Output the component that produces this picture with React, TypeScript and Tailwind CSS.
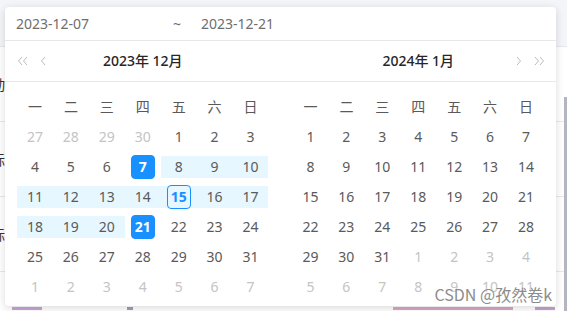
import React from "react";
import clsx from "clsx";

type Cell = {
  d: number;
  muted?: boolean;
  band?: boolean;
  sel?: boolean;
  today?: boolean;
};

const WEEK = ["一", "二", "三", "四", "五", "六", "日"];

const decRows = [
  [27, 28, 29, 30, 1, 2, 3],
  [4, 5, 6, 7, 8, 9, 10],
  [11, 12, 13, 14, 15, 16, 17],
  [18, 19, 20, 21, 22, 23, 24],
  [25, 26, 27, 28, 29, 30, 31],
  [1, 2, 3, 4, 5, 6, 7],
];

const janRows = [
  [1, 2, 3, 4, 5, 6, 7],
  [8, 9, 10, 11, 12, 13, 14],
  [15, 16, 17, 18, 19, 20, 21],
  [22, 23, 24, 25, 26, 27, 28],
  [29, 30, 31, 1, 2, 3, 4],
  [5, 6, 7, 8, 9, 10, 11],
];

const decCells: Cell[][] = decRows.map((row, r) =>
  row.map((d) => {
    const muted = (r === 0 && d > 7) || r === 5;
    return {
      d,
      muted,
      sel: !muted && (d === 7 || d === 21),
      band: !muted && d > 7 && d < 21,
      today: !muted && d === 15,
    };
  })
);

const janCells: Cell[][] = janRows.map((row, r) =>
  row.map((d) => ({ d, muted: (r === 4 && d < 8) || r === 5 }))
);

// bits of the table row peeking out under the popup
const peek = [
  { w: 30, c: "bg-[#c9a3d6]" },
  { w: 85, c: "" },
  { w: 6, c: "bg-[#9aa0b4]" },
  { w: 260, c: "" },
  { w: 120, c: "bg-[#d8a6c4]" },
  { w: 22, c: "" },
  { w: 20, c: "bg-[#c7a0d0]" },
];

const Chevron = ({ dir, double }: { dir: "l" | "r"; double?: boolean }) => {
  const one = dir === "l" ? "M5 1 L1.5 5 L5 9" : "M1 1 L4.5 5 L1 9";
  const two = dir === "l" ? "M10 1 L6.5 5 L10 9" : "M6 1 L9.5 5 L6 9";
  return (
    <svg width={double ? 11 : 6} height="10" viewBox={double ? "0 0 11 10" : "0 0 6 10"} fill="none">
      <path d={one} stroke="#bcbcbc" strokeWidth="1" />
      {double && <path d={two} stroke="#bcbcbc" strokeWidth="1" />}
    </svg>
  );
};

const Day = ({ c }: { c: Cell }) => (
  <div className="h-[30px] flex items-center justify-center">
    <div className={clsx("w-full h-[22px] flex items-center justify-center", c.band && "bg-[#e6f7ff]")}>
      <div
        className={clsx(
          "w-6 h-6 flex items-center justify-center rounded-sm border",
          c.sel
            ? "bg-[#1890ff] border-[#1890ff] text-white font-bold"
            : c.today
            ? "border-[#1890ff] text-[#1890ff] font-bold"
            : "border-transparent",
          !c.sel && !c.today && (c.muted ? "text-[#c4c4c4]" : "text-[#5a5a5a]")
        )}
      >
        {c.d}
      </div>
    </div>
  </div>
);

const Body = ({ rows }: { rows: Cell[][] }) => (
  <div className="px-3 pt-[9px]">
    <div className="grid grid-cols-7">
      {WEEK.map((w) => (
        <div key={w} className="h-[31px] flex items-center justify-center text-[#595959]">
          {w}
        </div>
      ))}
      {rows.flat().map((c, i) => (
        <Day key={i} c={c} />
      ))}
    </div>
  </div>
);

export default function App() {
  return (
    <div className="relative w-[567px] h-[311px] overflow-hidden bg-white text-sm font-['Noto_Sans','Noto_Sans_CJK_SC',sans-serif]">
      {/* page behind the popup */}
      <div className="flex flex-col h-full">
        <div className="h-[47px] shrink-0 bg-[#f4f5f9] border-b border-[#e6e6ec]" />
        <div className="flex flex-1">
          <div className="flex-1 flex flex-col">
            {["动", "标", "标"].map((t, i) => (
              <div key={i} className="h-[75px] shrink-0 border-b border-[#e8e8e8] flex items-center">
                <span className="ml-[-9px] text-[#333] font-['Noto_Sans_CJK_SC',sans-serif]">{t}</span>
              </div>
            ))}
            <div className="flex-1 flex items-end pl-[12px] pb-[1px]">
              {peek.map((p, i) => (
                <div key={i} className={clsx("h-[3px]", p.c)} style={{ width: p.w }} />
              ))}
            </div>
          </div>
          <div className="w-[3px] mt-[50px] bg-[#b3b5c1]" />
        </div>
      </div>

      {/* range picker popup */}
      <div className="absolute left-[5px] top-[7px] w-[551px] h-[299px] bg-white rounded shadow-[0_2px_8px_rgba(0,0,0,0.15)]">
        <div className="h-[34px] border-b border-[#e8e8e8] flex items-center text-[#6e6e6e]">
          <span className="w-[168px] pl-[11px]">2023-12-07</span>
          <span className="w-[28px]">~</span>
          <span>2023-12-21</span>
        </div>
        <div className="flex h-[41px] border-b border-[#e8e8e8] items-center text-[#262626] font-medium">
          <div className="flex-1 flex items-center">
            <div className="w-[70px] flex items-center gap-[12px] pl-[12px]">
              <Chevron dir="l" double />
              <Chevron dir="l" />
            </div>
            <div className="flex-1 text-center">2023年 12月</div>
            <div className="w-[70px]" />
          </div>
          <div className="flex-1 flex items-center">
            <div className="w-[70px]" />
            <div className="flex-1 text-center">2024年 1月</div>
            <div className="w-[70px] flex items-center justify-end gap-[12px] pr-[11px]">
              <Chevron dir="r" />
              <Chevron dir="r" double />
            </div>
          </div>
        </div>
        <div className="flex">
          <div className="flex-1">
            <Body rows={decCells} />
          </div>
          <div className="flex-1">
            <Body rows={janCells} />
          </div>
        </div>
      </div>

      <div className="absolute right-[15px] top-[283px] text-[16px] text-[#8c8c8c] font-['Noto_Sans_CJK_SC',sans-serif] [text-shadow:0_0_2px_#fff]">
        CSDN @孜然卷k
      </div>
    </div>
  );
}
